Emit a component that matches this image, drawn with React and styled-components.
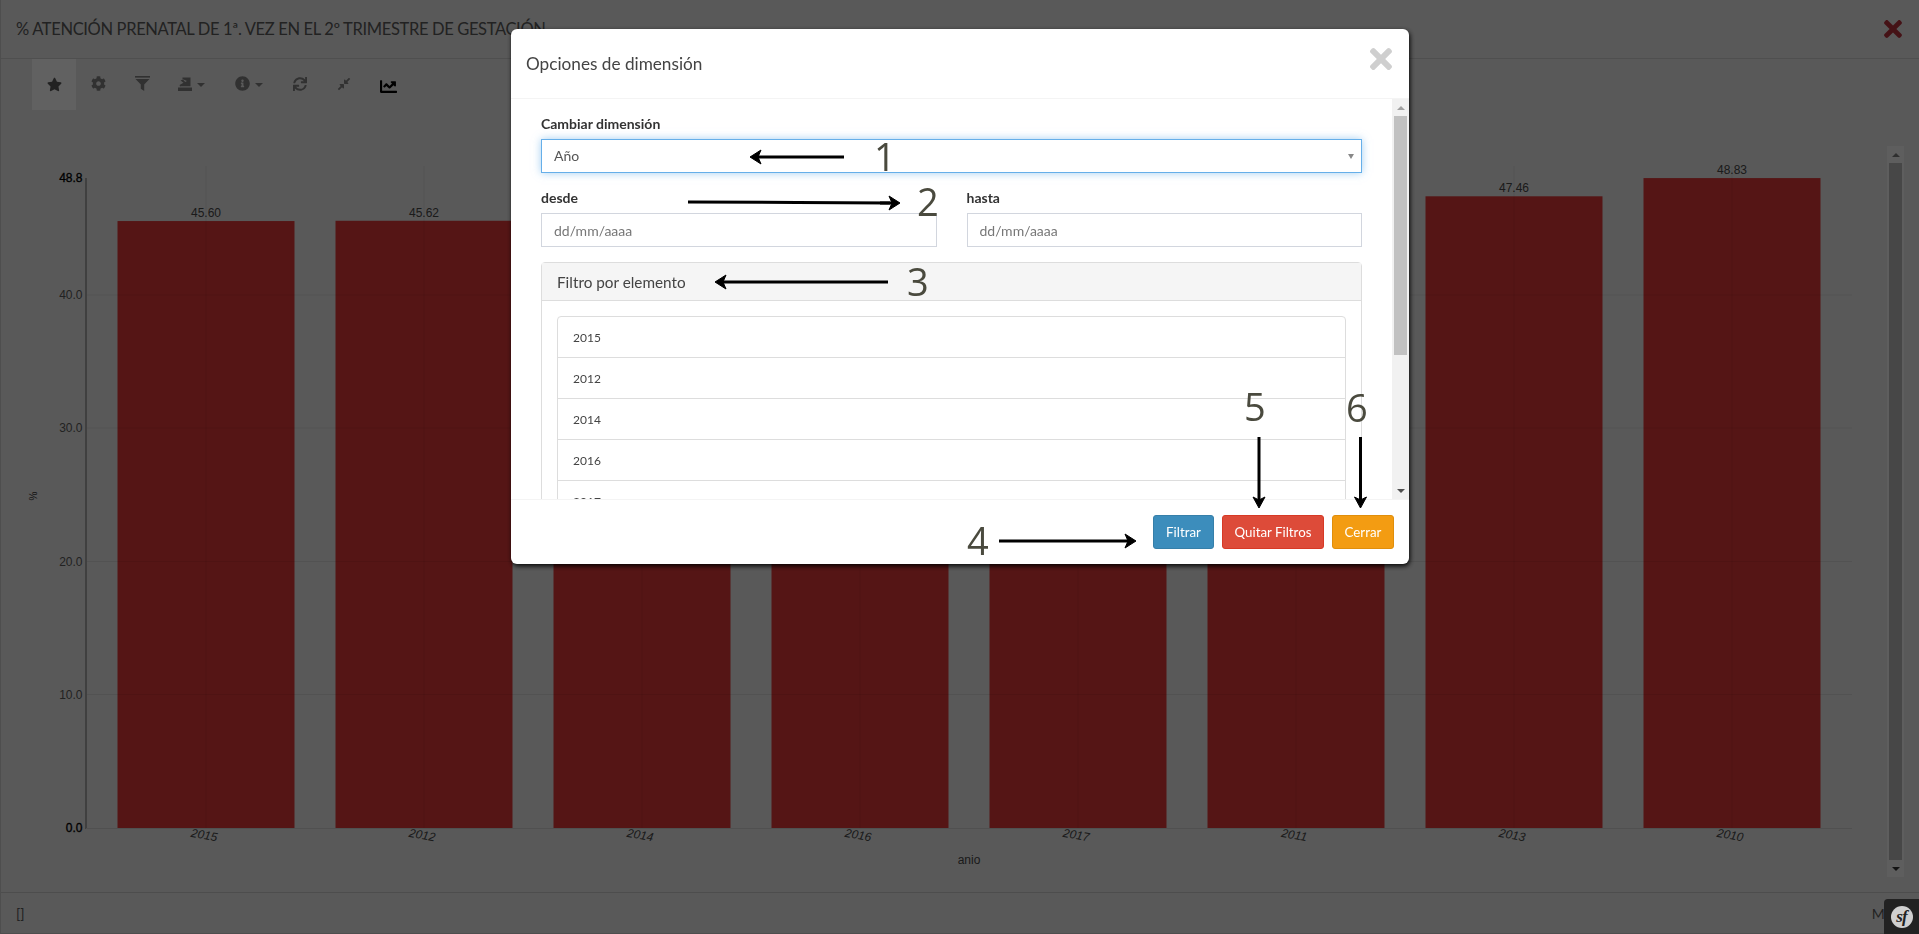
import React from "react";
import styled, { createGlobalStyle } from "styled-components";
import { FaStar, FaCog, FaInfoCircle, FaSync, FaCompressAlt, FaChartLine, FaTimes } from "react-icons/fa";

const UI_FONT = `"Lato", "Noto Sans", sans-serif`;
const CHART_FONT = `"Liberation Sans", Arial, sans-serif`;

const Global = createGlobalStyle`
  html, body { margin: 0; height: 100%; overflow: hidden; background: #dedede; }
  * { box-sizing: border-box; }
`;

const Page = styled.div`
  height: 934px;
  width: 1919px;
  display: flex;
  flex-direction: column;
  font-family: ${UI_FONT};
  border-left: 1px solid #c4c4c4;
  border-bottom: 1px solid #c4c4c4;
  color: #555;
`;
const PageHeader = styled.header`
  height: 59px;
  flex: none;
  display: flex;
  align-items: center;
  justify-content: space-between;
  padding: 0 13px 1px 15px;
  border-bottom: 1px solid #c6c6c6;
`;
const PageTitle = styled.h1`
  margin: 0;
  font-size: 16.5px;
  letter-spacing: -0.35px;
  font-weight: 400;
  color: #555;
  white-space: nowrap;
`;
const DangerClose = styled.span`
  display: flex;
  color: #ad2f39;
  font-size: 26px;
`;
const Toolbar = styled.div`
  height: 51px;
  flex: none;
  display: flex;
  padding: 0 0 2px 31px;
`;
const ToolButton = styled.div`
  width: ${(p) => p.$w || 44}px;
  margin-bottom: ${(p) => (p.$active ? "-2px" : "0")};
  display: flex;
  align-items: center;
  justify-content: ${(p) => (p.$w ? "flex-start" : "center")};
  padding: ${(p) => (p.$w ? "0 0 0 14px" : "0")};
  gap: 5px;
  font-size: 16px;
  color: ${(p) => p.$color || "#7a7a7a"};
  background: ${(p) => (p.$active ? "#f2f2f2" : "transparent")};
`;
const LowIcon = styled.span`
  display: flex;
  margin-top: 5px;
`;
const Caret = styled.i`
  width: 0;
  height: 0;
  border-left: 4px solid transparent;
  border-right: 4px solid transparent;
  border-top: 4px solid currentColor;
  margin-top: 3px;
`;
const ChartArea = styled.main`
  flex: 1;
  min-height: 0;
  display: flex;
  align-items: stretch;
`;
const ChartSvg = styled.svg`
  display: block;
  flex: none;
  width: 1886px;
  height: 782px;
`;
const OuterScroll = styled.div`
  width: 17px;
  flex: none;
  margin: 36px 0 15px;
  background: #ececec;
  display: flex;
  flex-direction: column;
  align-items: center;
  justify-content: space-between;
`;
const ScrollEnd = styled.div`
  height: 17px;
  flex: none;
  display: flex;
  align-items: center;
  justify-content: center;
  &::before {
    content: "";
    border-left: 4px solid transparent;
    border-right: 4px solid transparent;
    ${(p) => (p.$up ? `border-bottom: 4px solid ${p.$c};` : `border-top: 4px solid ${p.$c};`)}
  }
`;
const OuterThumb = styled.div`
  flex: 1;
  width: 13px;
  background: #b2b2b2;
`;
const PageFooter = styled.footer`
  height: 41px;
  flex: none;
  display: flex;
  align-items: center;
  justify-content: space-between;
  padding: 0 21px 0 15px;
  border-top: 1px solid #c0c0c0;
  font-size: 14px;
  color: #555;
`;

const Backdrop = styled.div`
  position: fixed;
  inset: 0;
  background: rgba(0, 0, 0, 0.6);
  font-family: ${UI_FONT};
`;
const Modal = styled.div`
  width: 898px;
  margin: 29px 0 0 511px;
  background: #fff;
  border-radius: 6px;
  box-shadow: 1px 2px 5px rgba(0, 0, 0, 0.95);
  overflow: hidden;
  display: flex;
  flex-direction: column;
`;
const ModalHeader = styled.div`
  height: 70px;
  flex: none;
  padding: 0 12px 0 15px;
  display: flex;
  align-items: center;
  justify-content: space-between;
  border-bottom: 1px solid #f4f4f4;
`;
const ModalTitle = styled.h4`
  margin: 0;
  font-size: 17.2px;
  font-weight: 400;
  color: #444;
`;
const CloseIcon = styled.span`
  display: flex;
  color: #cfcfcf;
  font-size: 32px;
  margin-top: -10px;
`;
const ModalBody = styled.div`
  height: 400px;
  flex: none;
  display: flex;
  overflow: hidden;
`;
const BodyContent = styled.div`
  flex: 1;
  min-width: 0;
  padding: 15px 30px 0;
`;
const InnerScroll = styled.div`
  width: 17px;
  flex: none;
  background: #f1f1f1;
  display: flex;
  flex-direction: column;
  align-items: center;
`;
const InnerThumb = styled.div`
  width: 13px;
  height: 239px;
  background: #c1c1c1;
`;
const Spacer = styled.div`
  flex: 1;
`;
const Field = styled.div`
  margin-bottom: 15px;
`;
const FieldLabel = styled.label`
  display: block;
  height: 20px;
  margin-bottom: 5px;
  font-size: 14px;
  line-height: 20px;
  font-weight: 700;
  color: #333;
`;
const SelectBox = styled.div`
  height: 34px;
  display: flex;
  align-items: center;
  justify-content: space-between;
  padding: 0 7px 2px 12px;
  border: 1px solid #66afe9;
  box-shadow: 0 0 8px rgba(102, 175, 233, 0.6);
  font-size: 14px;
  color: #555;
  &::after {
    content: "";
    margin-top: 2px;
    border-left: 3.5px solid transparent;
    border-right: 3.5px solid transparent;
    border-top: 5px solid #888;
  }
`;
const TwoCols = styled.div`
  display: grid;
  grid-template-columns: 1fr 1fr;
  column-gap: 30px;
`;
const DateInput = styled.input`
  display: block;
  width: 100%;
  height: 34px;
  padding: 0 12px;
  border: 1px solid #d2d6de;
  border-radius: 0;
  outline: none;
  font-family: ${UI_FONT};
  font-size: 14px;
  &::placeholder { color: #777; opacity: 1; }
`;
const Panel = styled.section`
  border: 1px solid #ddd;
  border-radius: 4px 4px 0 0;
`;
const PanelHeading = styled.div`
  height: 38px;
  padding-left: 15px;
  display: flex;
  align-items: center;
  background: #f5f5f5;
  border-bottom: 1px solid #ddd;
  font-size: 15.3px;
  color: #444;
`;
const PanelBody = styled.div`
  padding: 15px;
`;
const ListRow = styled.div`
  height: 42px;
  margin-bottom: -1px;
  padding-left: 15px;
  display: flex;
  align-items: center;
  border: 1px solid #ddd;
  font-size: 12px;
  color: #444;
  &:first-child { border-radius: 4px 4px 0 0; }
`;
const ModalFooter = styled.div`
  flex: none;
  display: flex;
  justify-content: flex-end;
  gap: 8px;
  padding: 15px;
  border-top: 1px solid #f4f4f4;
`;
const Button = styled.div`
  height: 34px;
  width: ${(p) => p.$w}px;
  display: flex;
  align-items: center;
  justify-content: center;
  border-radius: 3px;
  border: 1px solid ${(p) => p.$border};
  background: ${(p) => p.$bg};
  color: #fff;
  font-size: 13.3px;
`;

const Annotations = styled.svg`
  position: absolute;
  left: 0;
  top: 0;
  width: 1919px;
  height: 934px;
  pointer-events: none;
`;
const Digit = styled.span`
  position: absolute;
  left: ${(p) => p.$x}px;
  top: ${(p) => p.$y}px;
  font-family: "Open Sans", "Noto Sans", sans-serif;
  font-size: 38px;
  font-weight: 500;
  line-height: 52px;
  color: #4a4a3e;
`;
const SfToolbar = styled.div`
  position: fixed;
  right: 0;
  bottom: 0;
  width: 35px;
  height: 35px;
  background: #222;
  border-top-left-radius: 4px;
  display: flex;
  align-items: center;
  justify-content: center;
`;
const SfLogo = styled.span`
  width: 22px;
  height: 22px;
  border-radius: 50%;
  background: #d0d0d0;
  color: #222;
  display: flex;
  align-items: center;
  justify-content: center;
  font-family: "Liberation Serif", serif;
  font-style: italic;
  font-weight: 700;
  font-size: 17px;
  letter-spacing: -1px;
  line-height: 1;
`;

const BARS = [
  ["2015", 45.6, "45.60"],
  ["2012", 45.62, "45.62"],
  ["2014", 46, ""],
  ["2016", 46, ""],
  ["2017", 46, ""],
  ["2011", 46, ""],
  ["2013", 47.46, "47.46"],
  ["2010", 48.83, "48.83"],
];
const BASE = 828;
const UNIT = 13.31;
const YTICKS = [
  [48.8, 178, true],
  [40.0, 295, false],
  [30.0, 428, false],
  [20.0, 561.5, false],
  [10.0, 694.5, false],
  [0.0, 828, true],
];

function Chart() {
  return (
    <ChartSvg viewBox="1 110 1886 782">
      {BARS.map(([year, v, label], i) => {
        const x = 117.5 + i * 218;
        const top = BASE - v * UNIT;
        return (
          <g key={year}>
            <rect x={x} y={top} width={177} height={BASE - top} fill="#d43535" />
            <line x1={x + 88.5} x2={x + 88.5} y1={166} y2={BASE} stroke="#000" strokeOpacity="0.06" />
            {label && (
              <text x={x + 88.5} y={top - 4} textAnchor="middle" fontFamily={CHART_FONT} fontSize="12" fill="#444">
                {label}
              </text>
            )}
            <text
              transform={`translate(${x + 86} 839) rotate(10)`}
              textAnchor="middle"
              fontFamily={CHART_FONT}
              fontSize="12"
              fontStyle="italic"
              fill="#444"
            >
              {year}
            </text>
          </g>
        );
      })}
      {YTICKS.slice(1, 5).map(([, y]) => (
        <line key={y} x1={86} x2={1852} y1={y} y2={y} stroke="#000" strokeOpacity="0.07" />
      ))}
      <line x1={86} x2={86} y1={178} y2={829} stroke="#a0a0a0" strokeWidth="2" />
      <line x1={86} x2={1852} y1={828.5} y2={828.5} stroke="#c8c8c8" />
      {YTICKS.map(([v, y, strong]) => (
        <text
          key={v}
          x={82.5}
          y={y + 4}
          textAnchor="end"
          fontFamily={CHART_FONT}
          fontSize="12"
          fill={strong ? "#000" : "#555"}
          stroke={strong ? "#000" : "none"}
          strokeWidth="0.3"
        >
          {v.toFixed(1)}
        </text>
      ))}
      <text transform="translate(37 496) rotate(-90)" textAnchor="middle" fontFamily={CHART_FONT} fontSize="10" fill="#333">
        %
      </text>
      <text x={969} y={864} textAnchor="middle" fontFamily={CHART_FONT} fontSize="12" fill="#444">
        anio
      </text>
    </ChartSvg>
  );
}

const FunnelIcon = () => (
  <svg width="15" height="15" viewBox="0 0 15 15" fill="currentColor">
    <rect x="0" y="0" width="15" height="1.6" />
    <path d="M0.5 3h14L9.2 8.5V15L5.8 12.8V8.5z" />
  </svg>
);
const StampIcon = () => (
  <svg width="14" height="14" viewBox="0 0 14 14" fill="currentColor">
    <rect x="0" y="10.5" width="14" height="3.5" />
    <path d="M4.5 0.5h8v8.8H3.5L2 9.6 1.6 8l3.9-2.2L2.6 3.5 5 2.5 7.2 5 9 4 4.5 2z" />
  </svg>
);

const arrowLeft = (x1, x2, y) => (
  <g key={`l${y}`}>
    <line x1={x1} x2={x2 + 4} y1={y} y2={y} stroke="#000" strokeWidth="3" />
    <path d={`M${x2} ${y}L${x2 + 11} ${y - 7}L${x2 + 8} ${y}L${x2 + 11} ${y + 7}Z`} fill="#000" stroke="#000" />
  </g>
);
const arrowRight = (x1, x2, y) => (
  <g key={`r${y}`}>
    <line x1={x1} x2={x2 - 4} y1={y} y2={y} stroke="#000" strokeWidth="3" />
    <path d={`M${x2} ${y}L${x2 - 11} ${y - 7}L${x2 - 8} ${y}L${x2 - 11} ${y + 7}Z`} fill="#000" stroke="#000" />
  </g>
);
const arrowDown = (x, y1, y2) => (
  <g key={`d${x}`}>
    <line x1={x} x2={x} y1={y1} y2={y2 - 4} stroke="#000" strokeWidth="3" />
    <path d={`M${x} ${y2}L${x - 6} ${y2 - 11}L${x} ${y2 - 8}L${x + 6} ${y2 - 11}Z`} fill="#000" stroke="#000" />
  </g>
);

export default function App() {
  return (
    <>
      <Global />
      <Page>
        <PageHeader>
          <PageTitle>% ATENCIÓN PRENATAL DE 1ª. VEZ EN EL 2º TRIMESTRE DE GESTACIÓN</PageTitle>
          <DangerClose><FaTimes /></DangerClose>
        </PageHeader>
        <Toolbar>
          <ToolButton $active $color="#555"><FaStar size={15} /></ToolButton>
          <ToolButton><FaCog size={15} /></ToolButton>
          <ToolButton><FunnelIcon /></ToolButton>
          <ToolButton $w={57}><StampIcon /><Caret /></ToolButton>
          <ToolButton $w={57}><FaInfoCircle size={15} /><Caret /></ToolButton>
          <ToolButton><FaSync size={14} /></ToolButton>
          <ToolButton><FaCompressAlt size={14} /></ToolButton>
          <ToolButton $color="#000"><LowIcon><FaChartLine size={17} /></LowIcon></ToolButton>
        </Toolbar>
        <ChartArea>
          <Chart />
          <OuterScroll>
            <ScrollEnd $up $c="#777" />
            <OuterThumb />
            <ScrollEnd $c="#333" />
          </OuterScroll>
        </ChartArea>
        <PageFooter>
          <span>[]</span>
          <span>Mes</span>
        </PageFooter>
      </Page>

      <Backdrop>
        <Modal>
          <ModalHeader>
            <ModalTitle>Opciones de dimensión</ModalTitle>
            <CloseIcon><FaTimes /></CloseIcon>
          </ModalHeader>
          <ModalBody>
            <BodyContent>
              <Field>
                <FieldLabel>Cambiar dimensión</FieldLabel>
                <SelectBox>Año</SelectBox>
              </Field>
              <TwoCols>
                <Field>
                  <FieldLabel>desde</FieldLabel>
                  <DateInput placeholder="dd/mm/aaaa" readOnly />
                </Field>
                <Field>
                  <FieldLabel>hasta</FieldLabel>
                  <DateInput placeholder="dd/mm/aaaa" readOnly />
                </Field>
              </TwoCols>
              <Panel>
                <PanelHeading>Filtro por elemento</PanelHeading>
                <PanelBody>
                  {["2015", "2012", "2014", "2016", "2017"].map((y) => (
                    <ListRow key={y}>{y}</ListRow>
                  ))}
                </PanelBody>
              </Panel>
            </BodyContent>
            <InnerScroll>
              <ScrollEnd $up $c="#a0a0a0" />
              <InnerThumb />
              <Spacer />
              <ScrollEnd $c="#505050" />
            </InnerScroll>
          </ModalBody>
          <ModalFooter>
            <Button $w={61} $bg="#3c8dbc" $border="#367fa9">Filtrar</Button>
            <Button $w={102} $bg="#dd4b39" $border="#d73925">Quitar Filtros</Button>
            <Button $w={62} $bg="#f39c12" $border="#e08e0b">Cerrar</Button>
          </ModalFooter>
        </Modal>

        <Annotations viewBox="0 0 1919 934">
          {arrowLeft(844, 750, 157)}
          <polyline points="688,202 797,202.5 890,203" fill="none" stroke="#000" strokeWidth="3" />
          {arrowRight(880, 900, 203)}
          {arrowLeft(888, 715, 282)}
          {arrowRight(999, 1136, 541)}
          {arrowDown(1259, 437, 508)}
          {arrowDown(1360.5, 437, 508)}
        </Annotations>
        <Digit $x={874} $y={130}>1</Digit>
        <Digit $x={917} $y={175}>2</Digit>
        <Digit $x={907} $y={255}>3</Digit>
        <Digit $x={967} $y={514}>4</Digit>
        <Digit $x={1244} $y={380}>5</Digit>
        <Digit $x={1346} $y={381}>6</Digit>
      </Backdrop>

      <SfToolbar>
        <SfLogo>sf</SfLogo>
      </SfToolbar>
    </>
  );
}
